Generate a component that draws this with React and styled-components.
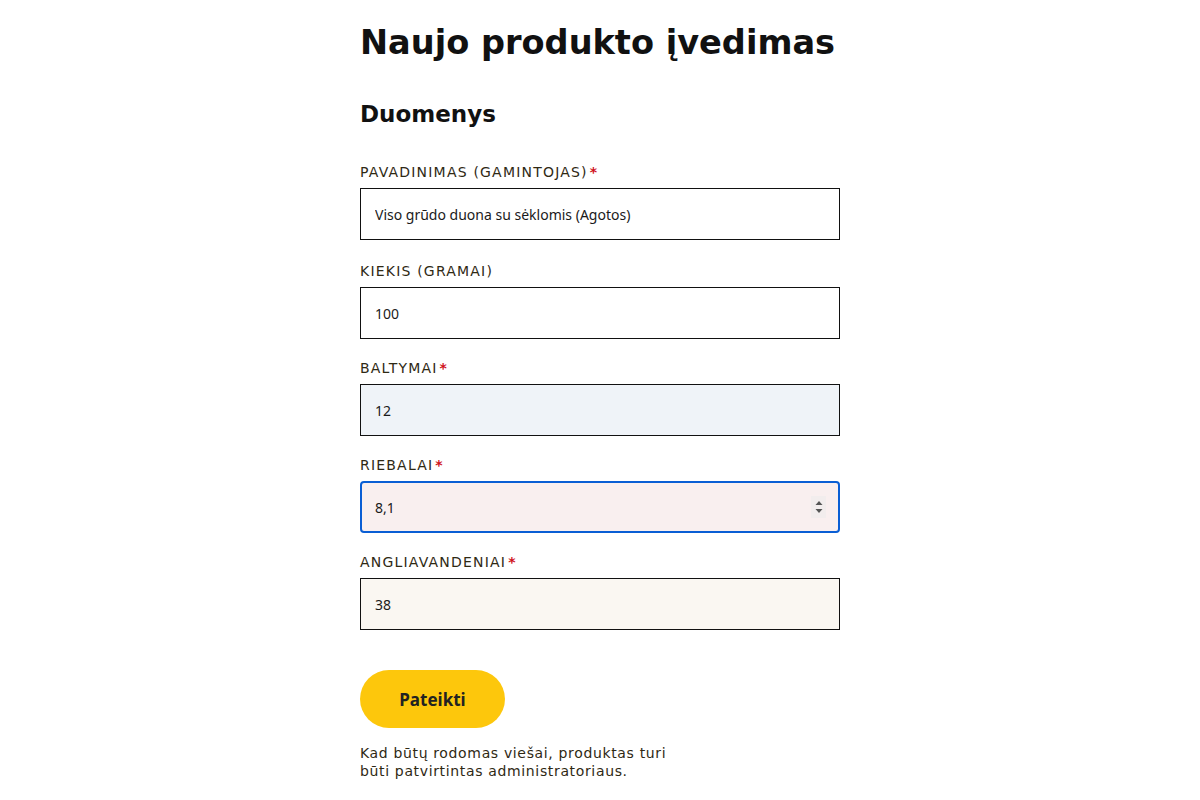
import React from "react";
import styled, { createGlobalStyle } from "styled-components";

const GlobalStyle = createGlobalStyle`
  html, body {
    margin: 0;
    padding: 0;
    background: #ffffff;
  }
`;

const fields = [
  { label: "Pavadinimas (gamintojas)", value: "Viso grūdo duona su sėklomis (Agotos)", required: true, bg: "#ffffff" },
  { label: "Kiekis (gramai)", value: "100", required: false, bg: "#ffffff" },
  { label: "Baltymai", value: "12", required: true, bg: "#eff3f8" },
  { label: "Riebalai", value: "8,1", required: true, bg: "#f9efef", focused: true },
  { label: "Angliavandeniai", value: "38", required: true, bg: "#faf7f2" },
];

export default function App() {
  return (
    <>
      <GlobalStyle />
      <Page>
        <Form onSubmit={(e) => e.preventDefault()}>
          <Title>Naujo produkto įvedimas</Title>
          <Subtitle>Duomenys</Subtitle>

          <Fields>
            {fields.map((f, i) => (
              <Field key={`field-${i}`}>
                <Label>
                  {f.label}
                  {f.required && <Star>*</Star>}
                </Label>
                <InputWrap>
                  <Input
                    readOnly
                    value={f.value}
                    $bg={f.bg}
                    $focused={f.focused}
                  />
                  {f.focused && (
                    <Spinner>
                      <svg width="8" height="16" viewBox="0 0 8 16">
                        <path d="M4 2 L7.5 6 L0.5 6 Z" fill="#555" />
                        <path d="M0.5 10 L7.5 10 L4 14 Z" fill="#555" />
                      </svg>
                    </Spinner>
                  )}
                </InputWrap>
              </Field>
            ))}
          </Fields>

          <Submit type="submit">Pateikti</Submit>

          <Note>
            Kad būtų rodomas viešai, produktas turi
            <br />
            būti patvirtintas administratoriaus.
          </Note>
        </Form>
      </Page>
    </>
  );
}

const Page = styled.div`
  display: flex;
  justify-content: center;
  width: 100%;
`;

const Form = styled.form`
  display: flex;
  flex-direction: column;
  align-items: flex-start;
  width: 480px;
  padding-top: 20px;
`;

const Title = styled.h1`
  margin: 0;
  color: #111111;
  font-family: "DejaVu Sans", sans-serif;
  font-size: 33.6px;
  font-weight: 700;
  line-height: 46px;
`;

const Subtitle = styled.h2`
  margin: 33px 0 0;
  color: #111111;
  font-family: "DejaVu Sans", sans-serif;
  font-size: 23px;
  font-weight: 700;
  line-height: 30px;
`;

const Fields = styled.div`
  display: flex;
  flex-direction: column;
  gap: 19px;
  width: 100%;
  margin-top: 33px;
`;

const Field = styled.div`
  display: flex;
  flex-direction: column;
  gap: 6px;

  &:first-child {
    margin-bottom: 2px;
  }
`;

const Label = styled.label`
  color: #2f2914;
  font-family: "DejaVu Sans", sans-serif;
  font-size: 14px;
  letter-spacing: 1.2px;
  line-height: 20px;
  text-transform: uppercase;
`;

const Star = styled.span`
  margin-left: 2px;
  color: #d0121b;
  font-weight: 700;
`;

const InputWrap = styled.div`
  position: relative;
  width: 100%;
`;

const Input = styled.input`
  box-sizing: border-box;
  display: block;
  width: 100%;
  height: 52px;
  margin: 0;
  border: ${(p) => (p.$focused ? "2px solid #0a5ed4" : "1px solid #111111")};
  border-radius: ${(p) => (p.$focused ? "4px" : "0")};
  background: ${(p) => p.$bg};
  padding: ${(p) => (p.$focused ? "0 13px" : "0 14px")};
  color: #1a1a1a;
  font-family: "Noto Sans", sans-serif;
  font-size: 14px;
  outline: none;
`;

const Spinner = styled.span`
  position: absolute;
  top: 15px;
  right: 14px;
  display: flex;
  align-items: center;
  justify-content: center;
  width: 15px;
  height: 22px;
  background: #f2eded;
`;

const Submit = styled.button`
  margin-top: 40px;
  border: none;
  border-radius: 29px;
  background: #fdc70c;
  width: 145px;
  height: 58px;
  color: #222222;
  font-family: "Noto Sans", sans-serif;
  font-size: 17px;
  font-weight: 700;
  cursor: pointer;
`;

const Note = styled.p`
  margin: 16px 0 0;
  color: #2f2914;
  font-family: "DejaVu Sans", sans-serif;
  font-size: 14px;
  letter-spacing: 0.65px;
  line-height: 18px;
`;
